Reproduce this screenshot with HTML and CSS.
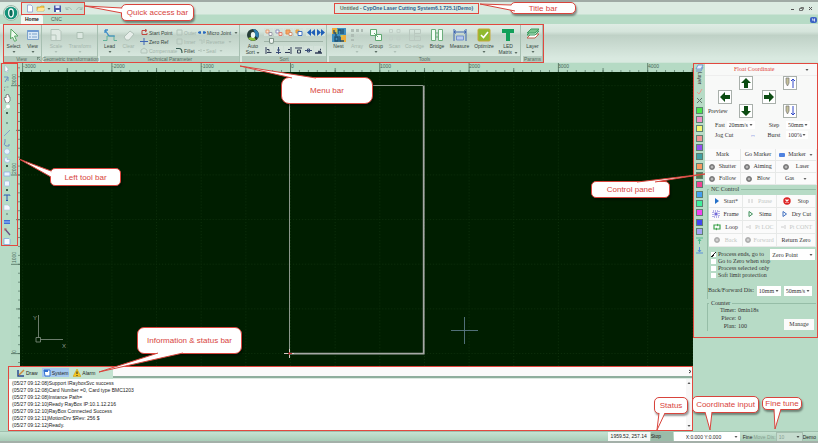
FILE: index.html
```
<!DOCTYPE html>
<html lang="en">
<head>
<meta charset="utf-8">
<title>CypOne Laser Cutting System</title>
<link rel="stylesheet" href="styles.css">
</head>
<body>
<header class="top">
  <button class="app-button" aria-label="Application menu">
    <svg width="16" height="16"><circle cx="8" cy="8" r="7.5" fill="#e4efe8" stroke="#9db8a8"/><circle cx="8" cy="8" r="6.3" fill="#149178"/><ellipse cx="8" cy="8" rx="2.3" ry="4" fill="#0b6a58" stroke="#fff" stroke-width="1.3"/></svg>
  </button>
  <div class="top-main">
    <div class="title-row">
      <div class="quick framed">
        <button aria-label="New"><svg width="8" height="9"><path d="M1.5 1h3.500l1.500 1.500V8h-5z" fill="#fff" stroke="#8c9bd0" stroke-width=".8"/></svg></button>
        <button aria-label="Open"><svg width="9" height="9"><path d="M1 3h3l1-1h3v5H1z" fill="#f7c64a" stroke="#b99b3c" stroke-width=".6"/><path d="M1 7l1.500-3H9L7.500 7z" fill="#ffe596"/></svg></button>
        <i class="caret"></i>
        <button aria-label="Save"><svg width="9" height="9"><path d="M1 1.500h7v6.500H1z" fill="#4a5aa8"/><path d="M2.500 1.500h4V4h-4z" fill="#dfe6ff"/><path d="M3 6h3.500v2H3z" fill="#fff"/></svg></button>
        <button aria-label="Undo"><svg width="9" height="9"><path d="M2 3v2.500h2.500M2.500 5c1-2 4-2 5 1" fill="none" stroke="#a5bdb0"/></svg></button>
        <button aria-label="Redo"><svg width="9" height="9"><path d="M7 3v2.500H4.500M6.500 5c-1-2-4-2-5 1" fill="none" stroke="#a5bdb0"/></svg></button>
      </div>
      <h1 class="title framed">Untitled - <span>CypOne Laser Cutting System6.1.725.1(Demo)</span></h1>
      <div class="window-buttons">
        <button aria-label="Minimize"><svg width="5" height="5"><path d="M1 3.500h3" stroke="#555"/></svg></button>
        <button aria-label="Restore"><svg width="5" height="5"><path d="M1.500 1.500h3v2M.5 2.500h3v2h-3z" fill="none" stroke="#555" stroke-width=".8"/></svg></button>
        <button aria-label="Close"><svg width="5" height="5"><path d="M1 1l3 3M4 1L1 4" stroke="#555"/></svg></button>
      </div>
    </div>
    <nav class="tabs">
      <a href="#home" class="current">Home</a><a href="#cnc">CNC</a>
      <button class="help" aria-label="Help"><svg width="7" height="6"><rect width="7" height="6" rx="2" fill="#3c62c4"/><path d="M2 2h1v2M4.500 1.500v3" stroke="#fff" stroke-width=".8" fill="none"/></svg></button>
    </nav>
  </div>
</header>

<div class="ribbon">
  <div class="groups framed">
    <section class="group g-view">
      <div class="tools">
        <button><svg width="14" height="14"><path d="M4 1l7 7H7.500l2 4.500-2 .8L5.500 9 3.500 11z" fill="#effaef" stroke="#58a866"/></svg>Select<i class="caret"></i></button>
        <button><svg width="14" height="14"><path d="M1.500 2.500h11v9h-11z" fill="#d9e8f6" stroke="#7da3cb"/><path d="M1.500 3h11" stroke="#6f9ad2" stroke-width="2"/><path d="M3 6h2M6 6h5M3 9h2M6 9h5" stroke="#7da3cb"/></svg>View<i class="caret"></i></button>
      </div>
      <h2>View<svg class="launcher" width="4" height="4"><path d="M0 .5h3M.5 0v3M1.500 1.500l2 2" stroke="#667c70" stroke-width=".7"/></svg></h2>
    </section>
    <section class="group g-geo">
      <div class="tools off">
        <button><svg width="14" height="14"><path d="M2 1.500h8l2 2v9H2zM2 7h5v5" fill="#dfe9e3" stroke="#b2c3b9"/></svg>Scale<i class="caret"></i></button>
        <button><svg width="14" height="14"><path d="M4 4.500h6v6H4z" fill="#dbe7e0" stroke="#adc0b4"/></svg>Transform<i class="caret"></i></button>
      </div>
      <h2>Geometric transformation</h2>
    </section>
    <section class="group g-tech">
      <div class="tools">
        <button><svg width="16" height="14"><path d="M1 12.500h4V8h7v4.500h3" fill="none" stroke="#63b29a"/><path d="M3 2l4 6M3 2v3M3 2h3" fill="none" stroke="#3d8bc7" stroke-width="1.300"/><path d="M7 8h6" stroke="#3d8bc7"/></svg>Lead<i class="caret"></i></button>
        <button class="off"><svg width="14" height="14"><path d="M2 9l6-6 4 3-5 6H4z" fill="#e7eeea" stroke="#b1c1b8"/></svg>Clear<i class="caret"></i></button>
        <div class="mini-grid">
          <button><svg width="8" height="7"><path d="M6 1.500H2v4h5V4M5 0l2 1.500L5 3" fill="none" stroke="#c0453e"/></svg>Start Point</button>
          <button class="off"><svg width="7" height="7"><path d="M1 1h5v5H1z" fill="none" stroke="#b2c3b9"/></svg>Outer</button>
          <button><svg width="8" height="7"><path d="M0 3.500h3M5 3.500h3M2 2v3M6 2v3" stroke="#2b6bc0" stroke-width="1.300"/></svg>Micro Joint<i class="caret"></i></button>
          <button><svg width="8" height="7"><path d="M0 3.500h8M4 0v7" stroke="#3f66b5"/></svg>Zero Ref</button>
          <button class="off"><svg width="7" height="7"><path d="M1 1h5v5H1z" fill="none" stroke="#b2c3b9"/></svg>Inner</button>
          <button class="off"><svg width="7" height="7"><path d="M1 2h3v4M6 5V1" fill="none" stroke="#b2c3b9"/></svg>Reverse<i class="caret"></i></button>
          <button class="off"><svg width="8" height="7"><path d="M1 6V3l3-2 3 2v3z" fill="none" stroke="#b2c3b9"/></svg>Compensate</button>
          <button><svg width="7" height="7"><path d="M0 1.500h3q3 0 3 4.500" fill="none" stroke="#3b5f56" stroke-width="1.200"/></svg>Fillet</button>
          <button class="off"><svg width="7" height="7"><path d="M0 3.500h2M5 3.500h2M3 2v3" stroke="#b2c3b9"/></svg>Seal<i class="caret"></i></button>
        </div>
      </div>
      <h2>Technical Parameter</h2>
    </section>
    <section class="group g-sort">
      <div class="tools">
        <button class="auto"><svg width="14" height="14"><circle cx="7" cy="7" r="6" fill="#263c38"/><path d="M7 1a6 6 0 0 1 5 9L9 8V5z" fill="#2f7fae"/><path d="M2 10a6 6 0 0 0 8 2L8 9H5z" fill="#8fc23c"/><ellipse cx="7" cy="7" rx="2.200" ry="3" fill="#eef6f1"/></svg>Auto<span>Sort <i class="caret"></i></span></button>
        <div class="sort-controls">
          <div class="sort-row">
            <button aria-label="To front"><svg width="8" height="7"><path d="M1 1h3v3H1z" fill="#ffe2cf" stroke="#e39a70"/><path d="M4 3.500h3v3H4z" fill="#fff" stroke="#9a9aa8"/></svg></button>
            <button aria-label="To back"><svg width="8" height="7"><path d="M1 1h3v3H1z" fill="#fff" stroke="#8f8fb8"/><path d="M4 3.500h3v3H4z" fill="#ffe2cf" stroke="#e07f70"/></svg></button>
            <button aria-label="Forward"><svg width="8" height="7"><path d="M1 1h4v4H1z" fill="#f7a662" stroke="#e58a48"/><path d="M4 3.500h3v3H4z" fill="#fff" stroke="#d09070"/></svg></button>
            <button aria-label="Backward"><svg width="8" height="7"><path d="M1 1h3v3H1z" fill="#f5b04c" stroke="#e39a40"/><path d="M3 2.500h4v4H3z" fill="#fff" stroke="#3f72c0"/></svg></button>
            <button class="jump" aria-label="Previous"><svg width="8" height="7"><path d="M4 0v7L0 3.500zM8 0v7L4 3.500z" fill="#1e5fb8"/></svg></button>
            <button aria-label="Next"><svg width="8" height="7"><path d="M0 0v7l4-3.500zM4 0v7l4-3.500z" fill="#1e5fb8"/></svg></button>
          </div>
          <input type="range" min="0" max="100" value="10" aria-label="Sequence">
          <div class="sort-row">
            <button aria-label="Align left"><svg width="7" height="7"><path d="M1 0v7M2 5.500h4.500M2 2.500h2v2" stroke="#333f58" fill="none"/></svg></button>
            <button aria-label="Align center"><svg width="7" height="7"><path d="M3.500 0v7M1 5.500h5M2 3h3" stroke="#3a4d78" fill="none"/></svg></button>
            <button aria-label="Align right"><svg width="7" height="7"><path d="M6 0v7M0 5.500h5M3 2.500h2" stroke="#333f58" fill="none"/></svg></button>
            <button aria-label="Align top"><svg width="7" height="7"><path d="M0 1h7M2.500 3h3v3h-3z" stroke="#333f58" fill="none"/></svg></button>
            <button aria-label="Align middle"><svg width="7" height="7"><path d="M0 3.500h7M2.500 2h2v3h-2z" stroke="#3a4d78" fill="none"/></svg></button>
            <button aria-label="Align bottom"><svg width="7" height="7"><path d="M0 6h7M3 4.500h3M5 2.500h1" stroke="#333f58" fill="none" stroke-width="1.400"/></svg></button>
          </div>
        </div>
      </div>
      <h2>Sort</h2>
    </section>
    <section class="group g-tools">
      <div class="tools">
        <button><svg width="14" height="14"><rect width="14" height="14" fill="#3f8fc0"/><path d="M0 0h5v6H0zM9 7h5v7H9z" fill="#ecae3c"/><path d="M2 2v3h2v3M6 6V2h3v4M11 1v5M3 9h3v4H3zM8 8v5h4" fill="none" stroke="#1f4f6c" stroke-width="1.300"/><path d="M5 1v5M8 8h3" stroke="#b8dc6c"/></svg>Nest</button>
        <button class="off"><svg width="14" height="14"><path d="M1 1h3v3H1zM6 1h3v3H6zM11 1h2v3h-2zM1 6h3v3H1zM1 11h3v2H1z" fill="#aebcb4"/><path d="M6.500 6.500h2v2h-2zM11 6.500h2M6.500 11.500h2" fill="none" stroke="#c4d2ca"/></svg>Array<i class="caret"></i></button>
        <button><svg width="14" height="14"><path d="M1.500 1.500h6v6h-6zM6.500 6.500h6v6h-6z" fill="#f6fff7" stroke="#5fa870"/><path d="M5 5l4 4" stroke="#5fa870"/></svg>Group<i class="caret"></i></button>
        <button class="off"><svg width="14" height="14"><path d="M1.500 1.500h3v3h-3zM9 1.500h3v3H9zM1.500 9h3v3h-3zM9 9h3v3H9z" fill="none" stroke="#c1cfc7"/></svg>Scan<i class="caret"></i></button>
        <button class="off"><svg width="14" height="14"><path d="M1.500 1.500h5v11h-5zM6.500 1.500h6v4h-6zM6.500 8.500h6v4h-6z" fill="none" stroke="#bac9c0"/></svg>Co-edge</button>
        <button><svg width="14" height="14"><path d="M1.500 1.500h4v11h-4zM8.500 1.500h4v11h-4z" fill="#f4fff6" stroke="#6cae7c"/><path d="M5.500 5h3M5.500 9h3" stroke="#6cae7c"/></svg>Bridge</button>
        <button><svg width="14" height="14"><path d="M1 1v12M13 1v12M1 4h12" stroke="#3d64b0" fill="none"/><path d="M3 2.500L1 4l2 1.500M11 2.500L13 4l-2 1.500" stroke="#3d64b0" fill="none"/><path d="M3.500 12V8h7v4z" fill="#b7c9ee" stroke="#7390cf"/></svg>Measure</button>
        <button><svg width="14" height="14"><rect x="1" y="1" width="12" height="12" rx="1" fill="#8fba2f" stroke="#c7a837"/><path d="M4 7l2.500 2.500L11 4" fill="none" stroke="#fff" stroke-width="1.600"/></svg>Optimize<i class="caret"></i></button>
        <button><svg width="14" height="14"><path d="M1 1h12v4H9v8H5V5H1z" fill="#12a05a"/></svg>LED<span>Matrix <i class="caret"></i></span></button>
      </div>
      <h2>Tools</h2>
    </section>
    <section class="group g-params">
      <div class="tools">
        <button><svg width="14" height="14"><path d="M1 10l4-4h8l-4 4z" fill="#fff" stroke="#c0604e"/><path d="M1 7l4-4h8L9 7z" fill="#bfe8cb" stroke="#3f9d62"/><path d="M1 5l4-4h8L9 5z" fill="#79c48d" stroke="#3f9d62"/></svg>Layer<i class="caret"></i></button>
      </div>
      <h2>Params</h2>
    </section>
  </div>
</div>

<main class="work">
  <div class="left-side">
    <div class="drawing-area">
      <nav class="toolbox framed" aria-label="Drawing tools">
        <button aria-label="Pick"><svg width="8" height="8"><path d="M2 0l4 5H4l1 2-1 .5L3 6 2 7z" fill="#fff" stroke="#a3b8d0" stroke-width=".6"/></svg></button>
        <button aria-label="Node edit"><svg width="8" height="8"><path d="M1 2h4l-3 5M5 2v4" fill="none" stroke="#6d93c4"/></svg></button>
        <button aria-label="Marquee"><svg width="8" height="8"><path d="M1.500 6V2h5" fill="none" stroke="#8ba4a0" stroke-dasharray="2 1"/></svg></button>
        <button aria-label="Pan"><svg width="8" height="9"><path d="M1 4l1-1 1 1V1h1V0h1v1l1 0v2l1 0v4L5 9H3z" fill="#fff" stroke="#666" stroke-width=".7"/></svg></button>
        <button class="short" aria-label="Zoom"><svg width="7" height="6"><circle cx="4" cy="2.500" r="2" fill="#fff"/><path d="M2.500 4L0 6" stroke="#e8f2f2"/></svg></button>
        <i class="dot"></i>
        <button class="spaced" aria-label="Point"><svg width="8" height="8"><circle cx="4" cy="4" r=".8" fill="#36544a"/></svg></button>
        <button aria-label="Line"><svg width="8" height="8"><path d="M1 7l6-6" stroke="#8497c4" stroke-width=".9"/></svg></button>
        <button aria-label="Polyline"><svg width="8" height="8"><path d="M2 0v3q-2 3 1 4h3V5" fill="none" stroke="#6a87bd" stroke-width=".9"/></svg></button>
        <button class="mid" aria-label="Circle"><svg width="8" height="7"><circle cx="4" cy="3.500" r="2.800" fill="#e7f2ff" stroke="#9db8e0" stroke-width=".7"/></svg></button>
        <button class="mid" aria-label="Arc"><svg width="8" height="7"><path d="M4 3.500V1a2.800 2.800 0 1 0 3 2.500z" fill="#f0f6ff" stroke="#9db8e0" stroke-width=".7"/></svg></button>
        <i class="dot"></i>
        <button aria-label="Rectangle"><svg width="8" height="8"><path d="M1 2h6v4H1z" fill="#eaf3ff" stroke="#8faee0" stroke-width=".8"/></svg></button>
        <button class="mid" aria-label="Rounded rectangle"><svg width="8" height="7"><rect x="1.500" y="1" width="5" height="5" rx="1" fill="#f0f6ff" stroke="#9db8e0" stroke-width=".7"/></svg></button>
        <i class="dot"></i>
        <button class="mid" aria-label="Text"><svg width="8" height="7"><path d="M1 1.500V1h6v.5M4 1v5.500M3 6.500h2" fill="none" stroke="#2f58b0"/></svg></button>
        <button class="mid spaced" aria-label="Part"><svg width="8" height="7"><path d="M1 1h4l2 2v3H1z" fill="#f5f9ff" stroke="#b2c2da" stroke-width=".6"/></svg></button>
        <i class="dot faint"></i>
        <button aria-label="Ruler"><svg width="8" height="8"><path d="M1 2h6v4H1z" fill="#3f6fd4"/><path d="M1 4h6" stroke="#9fc0ff"/></svg></button>
        <button aria-label="Wand"><svg width="8" height="8"><path d="M2 1l5 6" stroke="#6a4f80" stroke-width="1.300"/><path d="M1 1h3M2 0v3" stroke="#c06a6a" stroke-width=".7"/></svg></button>
        <button class="mid" aria-label="Page"><svg width="8" height="7"><path d="M1 .5h5l1 1v5H1z" fill="#f5faff" stroke="#7fa8e0" stroke-width=".8"/></svg></button>
      </nav>
      <svg class="ruler-left" width="100%" height="100%">
        <defs>
          <pattern id="vMinor" y="22.200" width="9" height="8.930" patternUnits="userSpaceOnUse"><path d="M7 .5h2" stroke="#5b7d6b" stroke-width=".8"/></pattern>
          <pattern id="vMajor" y="22.200" width="9" height="89.300" patternUnits="userSpaceOnUse"><path d="M0 .5h9M5 45.200h4" stroke="#4a6a59" stroke-width=".8"/></pattern>
        </defs>
        <rect width="9" height="100%" fill="url(#vMinor)"/><rect width="9" height="100%" fill="url(#vMajor)"/>
        <text transform="translate(5 22) rotate(-90)">3000</text><text transform="translate(5 111) rotate(-90)">2000</text><text transform="translate(5 200) rotate(-90)">1000</text><text transform="translate(5 290) rotate(-90)">0</text>
      </svg>
      <div class="plot">
        <svg class="ruler-top" width="100%" height="9">
          <defs>
            <pattern id="hMinor" x="2.100" width="8.930" height="9" patternUnits="userSpaceOnUse"><path d="M.5 7v2" stroke="#5b7d6b" stroke-width=".8"/></pattern>
            <pattern id="hMajor" x="2.100" width="89.300" height="9" patternUnits="userSpaceOnUse"><path d="M.5 0v9M45.200 5v4" stroke="#4a6a59" stroke-width=".8"/></pattern>
          </defs>
          <rect width="100%" height="9" fill="url(#hMinor)"/><rect width="100%" height="9" fill="url(#hMajor)"/>
          <text x="3" y="5">-3000</text><text x="92" y="5">-2000</text><text x="181" y="5">-1000</text><text x="271" y="5">0</text><text x="360" y="5">1000</text><text x="449" y="5">2000</text><text x="538" y="5">3000</text><text x="628" y="5">4000</text>
        </svg>
        <svg class="canvas" width="100%" height="100%">
          <defs><pattern id="grid" x="2.100" y="13.100" width="44.650" height="44.650" patternUnits="userSpaceOnUse"><path d="M.5 0v44.650M0 .5h44.650" stroke="#12360f" stroke-width=".7" stroke-dasharray="1 2"/></pattern></defs>
          <rect width="100%" height="100%" fill="#001e00"/><rect width="100%" height="100%" fill="url(#grid)"/>
          <path d="M269.500 281V13.500H403" fill="none" stroke="#8b978b"/>
          <path d="M403.700 13.500V281.700H269" fill="none" stroke="#a5a9a5" stroke-width="1.800"/>
          <path d="M264 281.500h10M269.500 277v9" stroke="#e8d8d8" stroke-width=".9"/><path d="M268 281.500h4M269.500 280v3" stroke="#c04040"/>
          <path d="M431 258.500h27M444.500 245v27" stroke="#5a7884" stroke-width=".9"/>
          <path d="M18.500 243v22.500M20.500 267.500H43M16 265.500h4.500v4.500H16z" fill="none" stroke="#879487" stroke-width=".8"/>
          <text x="13" y="248">Y</text><text x="42" y="276">X</text>
        </svg>
      </div>
    </div>
    <section class="info framed">
      <div class="info-head">
        <div class="info-tabs">
          <button><svg width="8" height="8"><path d="M1 1v6h6" fill="none" stroke="#2c4a90" stroke-width="1.500"/><path d="M2 6l5-5" stroke="#c98a3c" stroke-width="1.500"/></svg>Draw</button>
          <button class="selected"><svg width="8" height="8"><path d="M1 1h6v6H2z" fill="#fff" stroke="#3070d0"/><path d="M1 1h4v2H1z" fill="#3070d0"/></svg>System</button>
          <button><svg width="8" height="8"><path d="M4 0l4 7.500H0z" fill="#f5c51c" stroke="#c99b10" stroke-width=".5"/><path d="M4 2.500v2.500M4 6v1" stroke="#222"/></svg>Alarm</button>
        </div>
        <button class="close" aria-label="Close panel"><svg width="4" height="5"><path d="M1 1l2 1.500L1 4" fill="none" stroke="#333"/></svg></button>
      </div>
      <div class="log">
        <ol>
          <li>(05/27 09:12:08)Support IRayboxSvc success</li>
          <li>(05/27 09:12:08)Card Number =0, Card type BMC1203</li>
          <li>(05/27 09:12:08)Instance Path=</li>
          <li>(05/27 09:12:10)Ready RayBox IP:10.1.12.216</li>
          <li>(05/27 09:12:10)RayBox Connected Success</li>
          <li>(05/27 09:12:11)MotionDrv $Rev: 256 $</li>
          <li>(05/27 09:12:12)Ready.</li>
        </ol>
        <div class="scroll"><i class="caret up"></i><i class="caret"></i></div>
      </div>
    </section>
  </div>

  <aside class="panel-side">
    <div class="control framed">
      <div class="layers">
        <svg width="9" height="8"><path d="M1 5l2-4h5L6 5z" fill="#e8f0ff" stroke="#6288d0" stroke-width=".8"/><path d="M1 7h5l2-4" fill="none" stroke="#6288d0" stroke-width=".8"/></svg>
        <span class="layer-name">Layer</span>
        <div class="swatches">
          <button aria-label="Show"><svg width="7" height="7"><path d="M1 4l2 2 3-5" fill="none" stroke="#e89a90"/></svg></button>
          <button aria-label="Hide"><svg width="7" height="7"><path d="M1 1l5 5M6 1L1 6" stroke="#62766c"/></svg></button>
          <button class="sw c1" aria-label="Layer 1"></button><button class="sw c2" aria-label="Layer 2"></button><button class="sw c3" aria-label="Layer 3"></button><button class="sw c4" aria-label="Layer 4"></button><button class="sw c5" aria-label="Layer 5"></button><button class="sw c6" aria-label="Layer 6"></button><button class="sw c7" aria-label="Layer 7"></button><button class="sw c8" aria-label="Layer 8"></button><button class="sw c9" aria-label="Layer 9"></button><button class="sw c10" aria-label="Layer 10"></button><button class="sw c11" aria-label="Layer 11"></button><button class="sw c12" aria-label="Layer 12"></button><button class="sw c13" aria-label="Layer 13"></button><button class="sw c14" aria-label="Layer 14"></button>
          <button aria-label="First"><svg width="7" height="7"><path d="M0 1h7M3.500 2v5M2 4l1.500-2L5 4" fill="none" stroke="#4eb88c"/></svg></button>
          <button aria-label="Last"><svg width="7" height="7"><path d="M0 6h7M3.500 0v5M2 3l1.500 2L5 3" fill="none" stroke="#5a8fd8"/></svg></button>
        </div>
      </div>
      <div class="controls">
        <div class="jog">
          <button class="coordinate">Float Coordinate<i class="caret"></i></button>
          <div class="pad">
            <button class="up" aria-label="Up"><svg width="12" height="12"><path d="M6 1l5 5H8v5H4V6H1z" fill="#0c4c12"/></svg></button>
            <button class="zup" aria-label="Head up"><svg width="12" height="12"><path d="M2 1h3v5L3.500 9 2 6z" fill="#c5c09a" stroke="#777" stroke-width=".7"/><path d="M9 11V2M7 4l2-2 2 2" fill="none" stroke="#3048c8"/></svg></button>
            <button class="lf" aria-label="Left"><svg width="12" height="12"><path d="M1 6l5-5v3h5v4H6v3z" fill="#0c4c12"/></svg></button>
            <button class="rt" aria-label="Right"><svg width="12" height="12"><path d="M11 6L6 1v3H1v4h5v3z" fill="#0c4c12"/></svg></button>
            <button class="pv">Preview</button>
            <button class="dn" aria-label="Down"><svg width="12" height="12"><path d="M6 11l5-5H8V1H4v5H1z" fill="#0c4c12"/></svg></button>
            <button class="zdn" aria-label="Head down"><svg width="12" height="12"><path d="M2 1h3v5L3.500 9 2 6z" fill="#c5c09a" stroke="#777" stroke-width=".7"/><path d="M9 1v9M7 8l2 2 2-2" fill="none" stroke="#3048c8"/></svg></button>
          </div>
          <div class="moves">
            <label>Fast <span class="pick"><select><option>20mm/s</option></select></span></label><i></i>
            <label for="step">Step</label><span class="pick"><select id="step"><option>50mm</option></select></span>
            <label>Jog Cut</label><i class="link">↔</i>
            <label for="burst">Burst</label><span class="pick"><select id="burst"><option>100%</option></select></span>
          </div>
          <div class="triple">
            <button>Mark</button><button>Go Marker</button><button><svg width="6" height="5"><rect y="1" width="6" height="4" rx="1" fill="#4f82e0"/></svg>Marker<i class="caret"></i></button>
            <button><b class="lamp"></b>Shutter</button><button><b class="lamp"></b>Aiming</button><button><b class="lamp"></b>Laser</button>
            <button><b class="lamp"></b>Follow</button><button><b class="lamp"></b>Blow</button><button>Gas<i class="caret"></i></button>
          </div>
        </div>
        <fieldset>
          <legend>NC Control</legend>
          <div class="triple nc">
            <button><svg width="7" height="8"><path d="M2 1l4 3-4 3z" fill="#2470c8"/></svg>Start*</button>
            <button class="off"><svg width="7" height="8"><path d="M2 2v4M5 2v4" stroke="#ccc"/></svg>Pause</button>
            <button><svg width="8" height="8"><circle cx="4" cy="4" r="3.700" fill="#dc2424"/><path d="M2.500 2.500l3 3M5.500 2.500l-3 3" stroke="#fff" stroke-width="1.200"/></svg>Stop</button>
            <button><svg width="8" height="8"><path d="M1 1h6v6H1z" fill="none" stroke="#7168d8" stroke-dasharray="1 1"/><path d="M2.500 2.500h3v3h-3z" fill="#7168d8"/></svg>Frame</button>
            <button><svg width="7" height="8"><path d="M2 1.500L5.500 4 2 6.500z" fill="none" stroke="#3c8e58"/></svg>Simu</button>
            <button><svg width="7" height="8"><path d="M2 1.500L5.500 4 2 6.500z" fill="none" stroke="#3f6fc0"/></svg>Dry Cut</button>
            <button><svg width="8" height="8"><path d="M1 2h6v4H1z" fill="none" stroke="#3ea24c" stroke-width="1.200"/><path d="M4 .5v3L5.500 2zM4 4.500v3L2.500 6z" fill="#3ea24c"/></svg>Loop</button>
            <button class="off"><svg width="7" height="8"><path d="M1 4h3M5 2v4" stroke="#ccc"/></svg>Pt LOC</button>
            <button class="off"><svg width="7" height="8"><path d="M1 4h3M5 2v4" stroke="#ccc"/></svg>Pt CONT</button>
            <button class="off"><b class="lamp"></b>Back</button>
            <button class="off"><b class="lamp"></b>Forward</button>
            <button>Return Zero</button>
          </div>
          <div class="options">
            <label><input type="checkbox" checked>Process ends, go to</label>
            <span class="pick zero"><select aria-label="Return position"><option>Zero Point</option></select></span>
            <label><input type="checkbox">Go to Zero when stop</label>
            <label><input type="checkbox">Process selected only</label>
            <label><input type="checkbox">Soft limit protection</label>
          </div>
          <div class="distance">
            <label for="dis">Back/Forward Dis:</label><span class="pick"><select id="dis"><option>10mm</option></select></span><span class="pick"><select aria-label="Speed"><option>50mm/s</option></select></span>
          </div>
        </fieldset>
        <fieldset class="counter">
          <legend>Counter</legend>
          <dl><dt>Timer:</dt><dd>0min18s</dd><dt>Piece:</dt><dd>0</dd><dt>Plan:</dt><dd>100</dd></dl>
          <button>Manage</button>
        </fieldset>
      </div>
    </div>
  </aside>
</main>

<footer class="status">
  <output>1959.52, 257.14</output>
  <span class="state">Stop</span>
  <span class="pick coord"><select aria-label="Coordinates"><option>X:0.000 Y:0.000</option></select></span>
  <span class="fine">Fine</span>
  <label class="faded" for="move">Move Dis:</label>
  <span class="pick move faded"><select id="move"><option>10</option></select></span>
  <span>Demo</span>
</footer>

<div class="callout quick-note">Quick access bar<svg><path d="M1 4L-36 2L1 9"/></svg></div>
<div class="callout title-note">Title bar<svg><path d="M1 3L-30 2L5 9"/></svg></div>
<div class="callout menu-note">Menu bar<svg><path d="M11 1L-41-11L35 1"/></svg></div>
<div class="callout left-note">Left tool bar<svg><path d="M1 3L-31-9L1 9"/></svg></div>
<div class="callout control-note">Control panel<svg><path d="M46 1L114-7L64 1"/></svg></div>
<div class="callout info-note">Information &amp; status bar<svg><path d="M21 26L-38 45L46 26"/></svg></div>
<div class="callout status-note">Status<svg><path d="M5 16L3 33L11 16"/></svg></div>
<div class="callout coord-note">Coordinate input<svg><path d="M13 16L18 34L20 16"/></svg></div>
<div class="callout fine-note">Fine tune<svg><path d="M12 12L13 32L19 12"/></svg></div>
</body>
</html>
```
FILE: styles.css
```
* { box-sizing: border-box; }
body {
  margin: 0; min-height: 100vh; position: relative; display: flex; flex-direction: column; overflow: hidden;
  background: #b7dbc6; color: #33453c; font: 5px/6px "Liberation Sans", Arial, sans-serif; white-space: nowrap;
  border-top: 2px solid #a0aaa5; border-bottom: 2px solid #a4b0a9;
}
button, select, input { font: inherit; color: inherit; margin: 0; }
button { border: 0; padding: 0; background: none; display: flex; align-items: center; justify-content: center; }
h1, h2, ol, dl, dd, fieldset { margin: 0; padding: 0; }
svg { display: block; flex: none; }
.framed { outline: 1px solid #e2483f; position: relative; z-index: 2; }
.caret { display: inline-block; border: 2px solid transparent; border-top-color: currentColor; border-bottom: 0; transform: scale(.75); }
.caret.up { border-top: 0; border-bottom: 2px solid #222; }
button.off, .off button { color: #a3b5ab; }

.top { display: flex; height: 22px; background: linear-gradient(#dcebe2 0 12px, #b7dbc6 13px); }
.app-button { width: 18px; padding: 3px 0 0 4px; align-self: start; }
.top-main { flex: 1; display: flex; flex-direction: column; }
.title-row { display: grid; grid-template-columns: 100fr 143px 107fr; align-items: center; height: 13px; padding: 0 5px 0 4px; }
.quick { display: flex; align-items: center; width: 62px; height: 11px; gap: 2px; padding-left: 4px; background: linear-gradient(90deg, #dcebe2, #c6ddd0); }
.title { height: 9px; font: bold 5px/9px "Liberation Sans", Arial, sans-serif; text-align: center; color: #5b6b64; }
.title span { color: #2c5c8c; }
.window-buttons { display: flex; gap: 4px; justify-self: end; }
.tabs { display: flex; height: 9px; padding-left: 3px; align-items: stretch; }
.tabs a { padding: 0 4px; margin-right: 4px; line-height: 9px; color: #4a5c52; text-decoration: none; }
.tabs .current { background: #f2f8f4; border-radius: 2px 2px 0 0; font-weight: bold; color: #222; }
.help { margin-left: auto; padding-right: 1px; }

.ribbon { background: linear-gradient(#dfece4, #d5e4db 20%, #bfd1c6 30%, #d9e9e0 90%); height: 38px; padding-left: 4px; }
.groups { display: flex; width: max-content; height: 37px; margin-top: 1px; gap: 2px; }
.group { display: flex; flex-direction: column; border-right: 1px solid #a7bfb1; }
.group h2 { display: flex; align-items: center; justify-content: center; height: 6px; background: #b3c9bc; color: #5a6f63; font: 5px/6px "Liberation Sans", Arial, sans-serif; }
.launcher { margin-left: 10px; }
.tools { flex: 1; display: grid; padding-top: 3px; }
.tools > button { flex-direction: column; justify-content: start; }
.tools > button > svg { margin-bottom: 1px; }
.tools > button > .caret { margin-top: 2px; }
.g-view { width: 38px; } .g-view .tools { grid-template-columns: 19px 19px; } .g-view h2 { padding-left: 12px; }
.g-geo { width: 54px; } .g-geo .tools { grid-template-columns: 24px 24px; }
.g-tech { width: 140px; } .g-tech .tools { grid-template-columns: 19px 19px 1fr; }
.g-sort { width: 85px; } .g-sort .tools { grid-template-columns: 22px 1fr; }
.g-tools { width: 192px; } .g-tools .tools { grid-template-columns: 19px 18px 20px 17px 23px 22px 23px 26px 22px; }
.g-params { width: 20px; }
.mini-grid { display: grid; grid-template-columns: 36px 22px 40px; grid-auto-rows: 9px; padding-left: 2px; align-content: start; }
.mini-grid button { justify-content: start; gap: 1px; }
.mini-grid .caret { margin-left: 2px; }
.sort-controls { display: flex; flex-direction: column; gap: 1px; }
.sort-row { display: flex; gap: 1px; height: 8px; }
.sort-row button { width: 9px; background: #d4e2da; }
.sort-row .jump { margin-left: 2px; }
.sort-controls input { appearance: none; width: 59px; height: 8px; background: linear-gradient(#9fb3a7, #9fb3a7) 0 4px / 100% 1px no-repeat; }
.sort-controls input::-webkit-slider-thumb { appearance: none; width: 5px; height: 6px; background: #eef4f0; border: 1px solid #81958a; border-radius: 1px 1px 3px 3px; }

.work { flex: 1; display: flex; border-top: 1px solid #cfe5d8; }
.left-side { flex: 1; min-width: 0; display: flex; flex-direction: column; }
.drawing-area { flex: 1; min-height: 303px; display: grid; grid-template-columns: 11px 9px 1fr; }
.toolbox { display: flex; flex-direction: column; align-items: center; align-self: start; width: 15px; margin: 1px 0 0 2px; padding-right: 5px; height: 181px; }
.toolbox button { height: 10px; } .toolbox .mid { height: 8px; } .toolbox .short { height: 6px; }
.toolbox .spaced { margin-top: 2px; }
.toolbox .dot { height: 2px; width: 2px; margin: 2px 0; border-radius: 1px; background: #1c3a2c; flex: none; }
.toolbox .faint { opacity: .4; }
.ruler-left, .ruler-top { background: #b5dac4; }
.ruler-left text, .ruler-top text { font-size: 5px; fill: #48685a; }
.plot { display: flex; flex-direction: column; min-width: 0; }
.canvas { flex: 1; min-height: 0; }
.canvas text { font-size: 6px; fill: #8c988c; }
.info { margin: 1px 1px 1px 9px; background: #fff; }
.info-head { display: flex; justify-content: space-between; height: 12px; background: linear-gradient(#fafafa 9px, #8eae9d 9px 11px, #dcebe2 11px); }
.info-tabs { display: flex; gap: 3px; width: 104px; padding: 1px 0 2px 7px; background: #c3e2d0; }
.info-tabs button { padding: 0 1px; color: #222; }
.info-tabs .selected { background: #a4c8ef; }
.info-tabs svg { margin-right: 1px; }
.close { height: 8px; }
.log { display: flex; justify-content: space-between; min-height: 51px; color: #222; }
.log ol { list-style: none; padding: 1px 3px; line-height: 7px; }
.scroll { display: flex; flex-direction: column; justify-content: space-between; padding: 3px 1px; background: #f7f7f7; color: #222; }

.panel-side { width: 125px; flex: none; }
.control { display: flex; margin: 1px 1px 0 1px; height: 273px; font: 6px/7px "Liberation Serif", "Times New Roman", serif; color: #333; }
.layers { width: 11px; display: flex; flex-direction: column; align-items: center; }
.layer-name { writing-mode: vertical-rl; font: 5px/7px "Liberation Sans", Arial, sans-serif; height: 15px; }
.swatches { display: grid; grid-auto-rows: 1fr; height: 168px; place-items: center; }
.sw { width: 7px; height: 7px; border: 1px solid #5e7f70; }
.c1 { background: #4de64d; } .c2 { background: #f090c8; } .c3 { background: #f5f570; } .c4 { background: #f09494; } .c5 { background: #9450f0; } .c6 { background: #40a0a4; } .c7 { background: #f79a62; }
.c8 { background: #58794c; } .c9 { background: #f04494; } .c10 { background: #46a0f0; } .c11 { background: #40f09c; } .c12 { background: #f044f0; } .c13 { background: #4446f0; } .c14 { background: #a2a2f2; }
.controls { flex: 1; display: flex; flex-direction: column; min-width: 0; }
.jog { background: #f8f9f8; height: 121px; }
.coordinate { width: 100%; height: 12px; padding: 0 8px 0 29px; justify-content: space-between; color: #e03c34; border-bottom: 1px solid #eee; }
.coordinate .caret { color: #222; }
.pad { display: grid; grid-template-columns: 10px 14px 28px 18px 24px; grid-template-rows: 14px 14px 14px; padding-left: 3px; justify-items: center; }
.pad button { width: 14px; height: 14px; border: 1px solid #a9b0ab; background: #fff; }
.pad .up { grid-area: 1 / 3; } .pad .zup { grid-area: 1 / 5; }
.pad .lf { grid-area: 2 / 2; } .pad .rt { grid-area: 2 / 4; }
.pad .pv { grid-area: 3 / 1 / 4 / 3; border: 0; background: none; width: auto; justify-self: start; }
.pad .dn { grid-area: 3 / 3; } .pad .zdn { grid-area: 3 / 5; }
.moves { display: grid; grid-template-columns: 35px 12px 24px 1fr; grid-auto-rows: 10px; align-items: center; padding: 2px 8px 0 10px; }
.moves > label[for] { text-align: center; }
.link { color: #4a68d8; font-style: normal; }
.pick { display: inline-flex; position: relative; align-items: center; background: #fff; }
.pick select { appearance: none; border: 0; background: none; padding: 0 6px 0 2px; line-height: 8px; }
.pick::after { content: ""; position: absolute; right: 2px; border: 2px solid transparent; border-top-color: #222; border-bottom: 0; transform: scale(.75); pointer-events: none; }
.moves .pick { justify-self: start; }
.triple { display: grid; grid-template-columns: 36px 35px 1fr; grid-auto-rows: 12px; gap: 0; }
.triple button { justify-content: space-evenly; border: 1px solid #e7e9e8; border-width: 0 1px 1px 0; background: #fbfbfb; }
.jog .triple { margin-top: 9px; }
.lamp { width: 6px; height: 6px; border-radius: 50%; background: radial-gradient(#ddd, #777 70%); border: 1px solid #777; }
.triple .off { color: #c4c8c6; } .off .lamp { opacity: .6; }
fieldset { min-width: 0; margin: 1px 1px 0 2px; border: 1px solid #96bda7; border-width: 1px 0 0 1px; }
legend { padding: 0 2px; margin-left: 1px; line-height: 7px; }
.nc { grid-template-columns: 34px 34px 1fr; grid-auto-rows: 13px; margin: 2px 0 0 1px; }
.options { display: grid; grid-template-columns: 1fr 45px; grid-auto-rows: 7px; padding: 4px 2px 0 3px; }
.options label { display: flex; align-items: center; grid-column: 1; }
.options input { appearance: none; width: 5px; height: 5px; margin-right: 2px; background: #fff; flex: none; }
.options input:checked { background: linear-gradient(135deg, transparent 45%, #222 45% 60%, transparent 60%), #fff; }
.zero { height: 11px; margin-top: -2px; grid-area: 1 / 2; }
.zero select { width: 100%; }
.distance { display: flex; align-items: center; height: 11px; margin: 6px 0 3px; gap: 3px; }
.distance .pick { height: 10px; }
.counter { position: relative; display: flex; justify-content: space-between; align-items: end; }
.counter dl { display: grid; grid-template-columns: 25px auto; gap: 1px 2px; padding: 0 0 1px 3px; }
.counter dt { text-align: right; }
.counter button { width: 30px; height: 11px; background: #fbfbfb; margin: 0 2px 1px 0; }

.status { display: flex; align-items: center; justify-content: flex-end; height: 10px; padding-right: 2px; gap: 1px; border-top: 1px solid #9fc0ae; background: linear-gradient(#c5e2d1, #a9cdb8); color: #222; }
.status output { background: #f5f9f6; width: 42px; text-align: center; line-height: 9px; }
.state { width: 22px; background: #9bbba8; line-height: 9px; }
.coord { width: 66px; height: 9px; } .coord select { width: 100%; padding-left: 12px; }
.fine { margin-left: 2px; }
.faded { color: #86a091; }
.move { width: 25px; height: 8px; background: #c6dccf; outline: 1px solid #a6bfb0; }

.callout { position: absolute; display: flex; align-items: center; justify-content: center; z-index: 5; background: #fff; color: #d8443c; border: 1px solid #d8443c; border-radius: 5px; font-size: 8px; line-height: 9px; box-shadow: 1px 2px 2px #0006; }
.callout svg { position: absolute; left: -1px; top: -1px; width: 1px; height: 1px; overflow: visible; z-index: -1; }
.callout path { fill: #fff; stroke: #d8443c; stroke-width: 1; }
.quick-note { left: 121px; top: 2px; width: 73px; height: 17px; }
.title-note { left: 510px; top: 0; width: 66px; height: 12px; }
.menu-note { left: 281px; top: 75px; width: 92px; height: 27px; border-radius: 8px; }
.left-note { left: 50px; top: 166px; width: 71px; height: 18px; }
.control-note { right: 148px; top: 179px; width: 79px; height: 17px; }
.info-note { left: 137px; bottom: 87px; width: 105px; height: 27px; border-radius: 7px; }
.status-note { right: 130px; bottom: 27px; width: 34px; height: 17px; }
.coord-note { right: 59px; bottom: 28px; width: 67px; height: 17px; }
.fine-note { right: 16px; bottom: 31px; width: 40px; height: 13px; }
```
